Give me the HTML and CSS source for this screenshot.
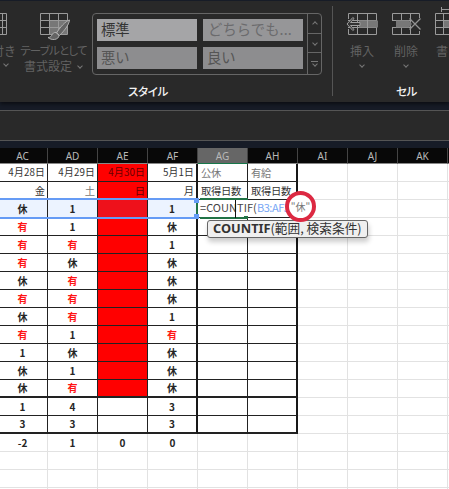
FILE: index.html
```
<!DOCTYPE html>
<html lang="ja">
<head>
<meta charset="utf-8">
<title>COUNTIF</title>
<link rel="stylesheet" href="styles.css">
</head>
<body>
<div class="app">
<header class="ribbon">
  <section class="group styles">
    <div class="tools">
      <div class="tool cond">
        <svg width="8" height="28" viewBox="0 0 8 28"><path class="ln" d="M0 .5h6.500v21H0M2.500 0v22M0 7.500h7M0 14.500h7"/></svg>
        <span>付き</span><i class="chev"></i>
      </div>
      <div class="tool tbl">
        <svg width="31" height="28" viewBox="0 0 31 28"><path class="fill" d="M10 8h17v13H10z"/><path class="ln" d="M.5 .5h27v21H.5zM9.500 0v22M18.500 0v22M0 7.500h28M0 14.500h28"/><path class="brush" d="M29.500 7c-4 1-10 8-13 13l3 2.500C24 18 29 12 29.500 7zM16 19.500c-5-.5-3 5-8 5 3 3 11 3 11-2.500z"/></svg>
        <span class="kana">テーブルとして</span><span class="second">書式設定<i class="chev"></i></span>
      </div>
      <div class="gallery">
        <div class="swatches">
          <div class="swatch normal">標準</div><div class="swatch faint">どちらでも...</div>
          <div class="swatch bad">悪い</div><div class="swatch bad">良い</div>
        </div>
        <div class="scroller"><div><i class="chev up"></i></div><div><i class="chev"></i></div><div class="more"><i class="chev"></i></div></div>
      </div>
    </div>
    <div class="caption">スタイル</div>
  </section>
  <section class="group cells">
    <div class="tools">
      <div class="tool ins">
        <svg width="33" height="24" viewBox="0 0 33 24"><path class="ln" d="M2.500 7V1.500h28v21h-28V17M11.500 1v22M21.500 1v22M2 8.500h29M2 15.500h29"/><path class="fill" d="M13 8.500h19v7H13z"/><path class="ln" d="M21.500 8v8"/><path class="arrow" d="M14 10.500H4.500L8 6.500 6.800 5.500 1 12l5.800 6.500L8 17.500 4.500 13.500H14z"/></svg>
        <span>挿入</span><i class="chev"></i>
      </div>
      <div class="tool del">
        <svg width="31" height="24" viewBox="0 0 31 24"><path class="ln" d="M1.500 8.500v-7h27V6M1.500 15.500v7h27V19M10.500 1v22M19.500 1v22M1 8.500h18M1 15.500h18"/><path class="fill" d="M5 8.500h13l3 3.500-3 3.500H5z"/><path class="cross" d="M18.500 6.500l11 11M29.500 6.500l-11 11"/></svg>
        <span>削除</span><i class="chev"></i>
      </div>
      <div class="tool fmt">
        <svg width="14" height="29" viewBox="0 0 14 29"><path class="fill" d="M8 13h6v7H8z"/><path class="ln" d="M14 6.500H.5v21H14M8.500 6v22M0 13.500h14M0 20.500h14M6.500 0v5M7 2.500h7"/></svg>
        <span>書</span>
      </div>
    </div>
    <div class="caption">セル</div>
  </section>
</header>
<div class="formula"></div>
<main class="sheet">
<table>
<thead><tr><th>AC</th><th>AD</th><th>AE</th><th>AF</th><th class="on">AG</th><th>AH</th><th>AI</th><th>AJ</th><th>AK</th><th></th></tr></thead>
<tbody class="data">
<tr class="date"><td>4月28日</td><td>4月29日</td><td>4月30日</td><td>5月1日</td><td>公休</td><td class="yu">有給</td><td></td><td></td><td></td><td></td></tr>
<tr class="day"><td>金</td><td class="sat">土</td><td>日</td><td>月</td><td>取得日数</td><td>取得日数</td><td></td><td></td><td></td><td></td></tr>
<tr class="picked"><td>休</td><td>1</td><td></td><td>1</td><td></td><td></td><td></td><td></td><td></td><td></td></tr>
<tr><td class="y">有</td><td>1</td><td></td><td>休</td><td></td><td></td><td></td><td></td><td></td><td></td></tr>
<tr><td class="y">有</td><td class="y">有</td><td></td><td>1</td><td></td><td></td><td></td><td></td><td></td><td></td></tr>
<tr><td class="y">有</td><td>休</td><td></td><td>休</td><td></td><td></td><td></td><td></td><td></td><td></td></tr>
<tr><td>休</td><td class="y">有</td><td></td><td>休</td><td></td><td></td><td></td><td></td><td></td><td></td></tr>
<tr><td class="y">有</td><td class="y">有</td><td></td><td>休</td><td></td><td></td><td></td><td></td><td></td><td></td></tr>
<tr><td>休</td><td class="y">有</td><td></td><td>1</td><td></td><td></td><td></td><td></td><td></td><td></td></tr>
<tr><td class="y">有</td><td>1</td><td></td><td class="y">有</td><td></td><td></td><td></td><td></td><td></td><td></td></tr>
<tr><td>1</td><td>休</td><td></td><td>休</td><td></td><td></td><td></td><td></td><td></td><td></td></tr>
<tr><td>休</td><td>1</td><td></td><td>休</td><td></td><td></td><td></td><td></td><td></td><td></td></tr>
<tr class="thick"><td>休</td><td class="y">有</td><td></td><td>休</td><td></td><td></td><td></td><td></td><td></td><td></td></tr>
</tbody>
<tbody class="data sums">
<tr><td>1</td><td>4</td><td></td><td>3</td><td></td><td></td><td></td><td></td><td></td><td></td></tr>
<tr class="thick"><td>3</td><td>3</td><td></td><td>3</td><td></td><td></td><td></td><td></td><td></td><td></td></tr>
</tbody>
<tbody>
<tr><td>-2</td><td>1</td><td>0</td><td>0</td><td></td><td></td><td></td><td></td><td></td><td></td></tr>
<tr><td></td><td></td><td></td><td></td><td></td><td></td><td></td><td></td><td></td><td></td></tr>
<tr><td></td><td></td><td></td><td></td><td></td><td></td><td></td><td></td><td></td><td></td></tr>
<tr><td></td><td></td><td></td><td></td><td></td><td></td><td></td><td></td><td></td><td></td></tr>
</tbody>
</table>
<div class="range"></div>
<div class="active"></div>
<div class="editor">=COUNTIF(<span>B3:AF3</span></div>
<div class="caret"></div>
<div class="hint"><b>COUNTIF</b>(範囲, 検索条件)</div>
<div class="ring">"休"</div>
</main>
</div>
</body>
</html>
```
FILE: styles.css
```
* { box-sizing: border-box; }
body { margin: 0; font-family: "Noto Sans CJK JP", sans-serif; }
.app { width: 449px; height: 489px; overflow: hidden; background: #171c27; }
.ribbon { display: flex; height: 102px; margin-bottom: 8px; background: #292929; border-top: 1px solid #171c27; box-shadow: 0 2px 4px #0b0d12; }
.group { display: flex; flex-direction: column; flex: none; position: relative; }
.styles { width: 333px; }
.cells { width: 116px; }
.cells::before { content: ""; position: absolute; left: -1px; top: 5px; height: 90px; width: 1px; background: #555; }
.tools { display: flex; height: 82px; }
.caption { font-size: 11.5px; line-height: 16px; color: #f2f2f2; font-feature-settings: "palt"; font-weight: 500; letter-spacing: -.3px; }
.styles .caption { padding-left: 128px; }
.cells .caption { padding-left: 63px; }
.tool { display: flex; flex-direction: column; align-items: center; flex: none; font-size: 12px; line-height: 15px; color: #626262; white-space: nowrap; }
.tool svg { display: block; fill: none; flex: none; }
.ln { stroke: #9a9a9a; }
.fill { fill: #777; }
.brush { fill: #646464; stroke: #b1b1b1; }
.arrow { fill: #333; stroke: #a0a0a0; }
.cross { stroke: #929292; stroke-width: 1.3; }
.cond { width: 16px; padding-top: 12px; align-items: flex-start; }
.cond svg { margin-bottom: 2px; }
.cond span { margin-left: -8px; }
.cond .chev { margin: 4px 0 0 4px; }
.tbl { width: 75px; padding-top: 12px; }
.tbl svg { margin-bottom: 2px; margin-left: 4px; }
.kana { font-size: 11.5px; font-feature-settings: "palt"; letter-spacing: -.75px; }
.chev { display: inline-block; width: 4px; height: 4px; border: solid #777; border-width: 0 1px 1px 0; transform: rotate(45deg); flex: none; }
.second .chev { margin: 0 2px 3px 6px; }
.second { margin-left: 1px; }
.up { transform: rotate(225deg); }
.gallery { display: flex; width: 230px; height: 62px; margin: 12px 0 0 1px; border: 1px solid #666; border-radius: 4px; }
.swatches { display: grid; grid-template-columns: 100px 100px; grid-template-rows: 22px 22px; gap: 6px; padding: 5px 4px; width: 214px; }
.swatch { padding-left: 4px; font-size: 14.3px; line-height: 19px; white-space: nowrap; color: #555; background: #8d8d8f; }
.normal { background: #a5a5a7; color: #343434; }
.faint { background: #969698; color: #6b6b6d; padding-left: 5px; letter-spacing: .1px; }
.scroller { flex: 1; border-left: 1px solid #666; display: grid; grid-template-rows: 20px 19px 1fr; }
.scroller div { display: grid; place-items: center; border-bottom: 1px solid #666; }
.scroller .more { border: 0; align-content: center; }
.more::before { content: ""; width: 7px; height: 1px; background: #777; }
.ins { width: 42px; margin-left: 8px; padding-top: 11px; }
.del { width: 46px; padding-top: 11px; }
.fmt { width: 14px; margin-left: 6px; padding-top: 6px; }
.cells svg { margin-bottom: 7px; }
.cells .chev { margin-top: 5px; }
.formula { height: 31px; margin-bottom: 7px; background: #292929; border: solid #555; border-width: 1px 0; }
.sheet { position: relative; height: 341px; background: #fff; }
table { width: 500px; margin-left: -2px; table-layout: fixed; border-collapse: separate; border-spacing: 0; }
tr { height: 18px; }
thead tr { height: 16px; }
th { padding: 0; height: 16px; background: #080808; color: #b8b8b8; border-right: 1px solid #444; border-bottom: 1px solid #888; font: 10px/14px "Noto Sans", sans-serif; }
th.on { background: #666; border-bottom: 1px solid #16774a; }
td { height: 18px; padding: 0; text-align: center; font-size: 10px; line-height: 15px; font-weight: 700; color: #252525; border: solid #e2e2e2; border-width: 0 1px 1px 0; white-space: nowrap; }
.data td:nth-child(-n+6) { border-color: #222; }
.data td:nth-child(4), .data td:nth-child(6) { border-right: 2px solid #181818; }
.data td:nth-child(3) { background: #f00; }
.sums td:nth-child(3) { background: #fff; }
.thick td:nth-child(-n+6) { border-bottom-width: 2px; line-height: 14px; }
td.y { color: #ff1515; }
.date td, .day td { font-weight: 400; text-align: right; padding-right: 2px; font-size: 10.3px; color: #333; }
.date td:nth-child(-n+4) { font-size: 9.8px; letter-spacing: .15px; }
.date td:nth-child(3), .day td:nth-child(3) { color: #600; }
.date td:nth-child(n+5), .day td:nth-child(n+5) { text-align: left; padding: 0 0 0 3px; letter-spacing: -.3px; }
.date td:nth-child(5), .date td.yu, .day td.sat { color: #777; }
.picked td:nth-child(-n+4) { background: #ecf3ff; }
.picked td:nth-child(3) { background: #ee111b; }
.range { position: absolute; left: -3px; top: 50px; width: 201px; height: 21px; border: 2px solid #659bf5; border-right: 0; }
.range::before, .range::after { content: ""; position: absolute; right: -1px; width: 5px; height: 5px; background: #659bf5; }
.range::before { top: -2px; }
.range::after { bottom: -2px; }
.active { position: absolute; left: 196px; top: 50px; width: 52px; height: 21px; border: 2px solid #217346; border-right: 0; clip-path: polygon(4px 0, 100% 0, 100% 100%, 4px 100%, 4px 16px, 0 16px, 0 5px, 4px 5px); }
.active::after { content: ""; position: absolute; right: -1px; bottom: -2px; width: 5px; height: 4px; background: #217346; }
.editor { position: absolute; left: 200px; top: 52px; width: 92px; height: 16px; background: #fff; font-size: 11px; line-height: 15px; color: #444; letter-spacing: .05px; white-space: nowrap; }
.editor span { color: #78a7f5; letter-spacing: -.45px; }
.caret { position: absolute; left: 235px; top: 52px; width: 1px; height: 18px; background: #111; }
.hint { position: absolute; left: 207px; top: 72px; width: 161px; height: 18px; border: 1px solid #666; border-radius: 3px; background: #efefef; box-shadow: 1px 4px 5px #0003; padding-left: 5px; font-size: 12.7px; line-height: 14px; color: #333; white-space: nowrap; }
.hint b { font-family: "Noto Sans", sans-serif; font-size: 12.8px; }
.ring { position: absolute; left: 285px; top: 43px; width: 31px; height: 31px; border: 4.5px solid #dc2942; border-radius: 50%; background: #fff; font-size: 10px; line-height: 23px; text-align: center; color: #777; white-space: nowrap; }
```
